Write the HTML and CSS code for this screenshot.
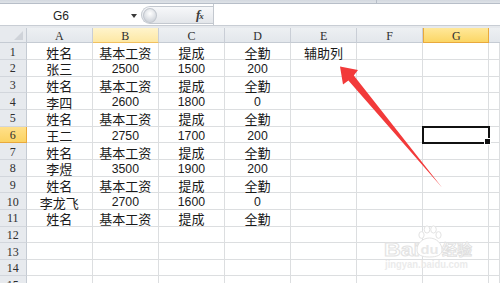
FILE: index.html
```html
<!DOCTYPE html>
<html lang="zh-CN">
<head>
<meta charset="utf-8">
<title>Excel 辅助列</title>
<link rel="stylesheet" href="styles.css">
</head>
<body>
<div class="app">
  <div class="ribbon-edge"><span class="ribbon-split"></span></div>
  <div class="formula-bar">
    <div class="namebox"><span class="name">G6</span><span class="dd"></span></div>
    <div class="fx-zone"><span class="grip"></span><span class="fx">f<span class="fx-x">x</span></span></div>
    <div class="formula-input"></div>
  </div>
  <div class="gap-strip"></div>
  <div class="sheet">
    <div class="corner"><span class="corner-tri"></span></div>
    <div class="ch">A</div><div class="ch ch-hover">B</div><div class="ch">C</div><div class="ch">D</div><div class="ch">E</div><div class="ch">F</div><div class="ch ch-sel">G</div><div class="ch ch-last"></div>

    <div class="rh">1</div><div class="c cj">姓名</div><div class="c cj">基本工资</div><div class="c cj">提成</div><div class="c cj">全勤</div><div class="c cj">辅助列</div><div class="c"></div><div class="c"></div><div class="c"></div>
    <div class="rh">2</div><div class="c cj">张三</div><div class="c n">2500</div><div class="c n">1500</div><div class="c n">200</div><div class="c"></div><div class="c"></div><div class="c"></div><div class="c"></div>
    <div class="rh">3</div><div class="c cj">姓名</div><div class="c cj">基本工资</div><div class="c cj">提成</div><div class="c cj">全勤</div><div class="c"></div><div class="c"></div><div class="c"></div><div class="c"></div>
    <div class="rh">4</div><div class="c cj">李四</div><div class="c n">2600</div><div class="c n">1800</div><div class="c n">0</div><div class="c"></div><div class="c"></div><div class="c"></div><div class="c"></div>
    <div class="rh">5</div><div class="c cj">姓名</div><div class="c cj">基本工资</div><div class="c cj">提成</div><div class="c cj">全勤</div><div class="c"></div><div class="c"></div><div class="c"></div><div class="c"></div>
    <div class="rh rh-sel">6</div><div class="c cj">王二</div><div class="c n">2750</div><div class="c n">1700</div><div class="c n">200</div><div class="c"></div><div class="c"></div><div class="c active"></div><div class="c"></div>
    <div class="rh">7</div><div class="c cj">姓名</div><div class="c cj">基本工资</div><div class="c cj">提成</div><div class="c cj">全勤</div><div class="c"></div><div class="c"></div><div class="c"></div><div class="c"></div>
    <div class="rh">8</div><div class="c cj">李煜</div><div class="c n">3500</div><div class="c n">1900</div><div class="c n">200</div><div class="c"></div><div class="c"></div><div class="c"></div><div class="c"></div>
    <div class="rh">9</div><div class="c cj">姓名</div><div class="c cj">基本工资</div><div class="c cj">提成</div><div class="c cj">全勤</div><div class="c"></div><div class="c"></div><div class="c"></div><div class="c"></div>
    <div class="rh">10</div><div class="c cj">李龙飞</div><div class="c n">2700</div><div class="c n">1600</div><div class="c n">0</div><div class="c"></div><div class="c"></div><div class="c"></div><div class="c"></div>
    <div class="rh">11</div><div class="c cj">姓名</div><div class="c cj">基本工资</div><div class="c cj">提成</div><div class="c cj">全勤</div><div class="c"></div><div class="c"></div><div class="c"></div><div class="c"></div>
    <div class="rh">12</div><div class="c"></div><div class="c"></div><div class="c"></div><div class="c"></div><div class="c"></div><div class="c"></div><div class="c"></div><div class="c"></div>
    <div class="rh">13</div><div class="c"></div><div class="c"></div><div class="c"></div><div class="c"></div><div class="c"></div><div class="c"></div><div class="c"></div><div class="c"></div>
    <div class="rh">14</div><div class="c"></div><div class="c"></div><div class="c"></div><div class="c"></div><div class="c"></div><div class="c"></div><div class="c"></div><div class="c"></div>
    <div class="rh">15</div><div class="c"></div><div class="c"></div><div class="c"></div><div class="c"></div><div class="c"></div><div class="c"></div><div class="c"></div><div class="c"></div>
  </div>
</div>
<svg class="overlay" width="500" height="283" viewBox="0 0 500 283">
  <g class="watermark">
    <text class="wm-bai" x="384" y="256" textLength="36" lengthAdjust="spacingAndGlyphs">Bai</text>
    <ellipse class="wm-paw" cx="421.5" cy="235" rx="2.6" ry="3.4"/>
    <ellipse class="wm-paw" cx="427" cy="229.5" rx="2.8" ry="3.6"/>
    <ellipse class="wm-paw" cx="433.5" cy="229.5" rx="2.8" ry="3.6"/>
    <ellipse class="wm-paw" cx="438.5" cy="235" rx="2.6" ry="3.4"/>
    <path class="wm-paw" d="M417 250 C417 243 423 238 429.5 238 C436 238 442 243 442 250 C442 255 437 257 429.5 257 C422 257 417 255 417 250 Z"/>
    <text class="wm-du" x="420.5" y="254" textLength="18" lengthAdjust="spacingAndGlyphs">du</text>
    <text class="wm-jy" x="442" y="255" textLength="30" lengthAdjust="spacingAndGlyphs">经验</text>
    <text class="wm-url" x="385" y="268" textLength="83" lengthAdjust="spacingAndGlyphs">jingyan.baidu.com</text>
  </g>
  <polygon class="arrow" points="340,66.5 358,70 353.8,75.6 442,187.5 348.4,80.4 343,84.5"/>
</svg>
</body>
</html>
```

FILE: styles.css
```css
* { box-sizing: border-box; }

html, body {
  margin: 0;
  padding: 0;
}

body {
  width: 500px;
  height: 283px;
  overflow: hidden;
  position: relative;
  background: #ffffff;
  font-family: "Liberation Sans", "Noto Sans CJK SC", sans-serif;
}

.app {
  display: flex;
  flex-direction: column;
  width: 500px;
}

/* top strip (bottom edge of ribbon) */
.ribbon-edge {
  height: 4px;
  background: linear-gradient(#d3d8df, #dfe3e8);
  border-bottom: 1px solid #b7bec8;
  display: flex;
  padding-left: 376px;
}
.ribbon-split {
  width: 1px;
  background: #b7bec8;
}

/* formula bar */
.formula-bar {
  height: 22px;
  display: flex;
  background: #ffffff;
  border-bottom: 1px solid #c8cdd4;
}
.namebox {
  width: 141px;
  display: flex;
  align-items: center;
  padding-left: 53px;
  padding-top: 2px;
}
.name {
  font-size: 12px;
  color: #1f1f1f;
  font-family: "Liberation Sans", sans-serif;
  flex: 1;
}
.dd {
  width: 0;
  height: 0;
  border-left: 3.5px solid transparent;
  border-right: 3.5px solid transparent;
  border-top: 4px solid #3a3a3a;
  margin-right: 4px;
  margin-top: 1px;
}
.fx-zone {
  width: 72px;
  margin: 2px 0 1px 0;
  display: flex;
  align-items: center;
  border: 1px solid #c3c8cf;
  border-right: none;
  border-radius: 10px 0 0 10px;
  background: linear-gradient(#f7f8fa, #e3e6ea);
  padding-left: 1px;
}
.grip {
  width: 14px;
  height: 15px;
  border-radius: 50%;
  background: radial-gradient(circle at 50% 35%, #ffffff, #d4d8de 70%);
  border: 1px solid #c2c7ce;
}
.fx {
  margin-left: 39px;
  font-family: "Liberation Serif", serif;
  font-style: italic;
  font-weight: bold;
  font-size: 13px;
  color: #3b3b3b;
  letter-spacing: -1px;
}
.fx-x {
  font-size: 9px;
}
.formula-input {
  flex: 1;
  border-left: 1px solid #c3c8cf;
  background: #ffffff;
}

.gap-strip {
  height: 2px;
  background: #e6e9ed;
}

/* sheet grid */
.sheet {
  display: grid;
  grid-template-columns: 26.7px repeat(7, 66.1px) 1fr;
  grid-template-rows: 15.3px repeat(15, 16.67px);
}

.corner {
  background: #e7eaee;
  border-right: 1px solid #c5cbd3;
  border-bottom: 1px solid #c5cbd3;
  position: relative;
}
.corner-tri {
  position: absolute;
  right: 3px;
  bottom: 2px;
  width: 0;
  height: 0;
  border-left: 9px solid transparent;
  border-bottom: 9px solid #cfd3d9;
}

.ch {
  background: linear-gradient(#edf0f3, #e3e7ec);
  border-right: 1px solid #c9ced6;
  border-bottom: 1px solid #c5cbd3;
  font-family: "Liberation Serif", "DejaVu Serif", serif;
  font-size: 12px;
  color: #2e2e2e;
  text-align: center;
  line-height: 13px;
  padding-top: 2px;
}
.ch-hover {
  background: linear-gradient(#fff4cc, #fde8a4);
  border-bottom-color: #f0c060;
}
.ch-sel {
  background: linear-gradient(#ffe89a, #fbd665);
  border-right-color: #e9a93c;
  border-left: 1px solid #e9a93c;
  border-bottom-color: #e9a93c;
}
.ch-last {
  border-right: none;
}

.rh {
  background: #e7eaee;
  border-right: 1px solid #c5cbd3;
  border-bottom: 1px solid #d2d6dc;
  font-family: "Liberation Serif", "DejaVu Serif", serif;
  font-size: 12px;
  color: #2e2e2e;
  text-align: center;
  line-height: 14px;
  padding-top: 1.5px;
  overflow: hidden;
}
.rh-sel {
  background: linear-gradient(#ffe08a, #fbd363);
  border-bottom-color: #e9a93c;
  border-right-color: #e9a93c;
}

.c {
  border-right: 1px solid #dcdee0;
  border-bottom: 1px solid #dcdee0;
  text-align: center;
  color: #111111;
  white-space: nowrap;
}
.cj {
  font-family: "Noto Sans CJK SC", sans-serif;
  font-size: 13px;
  line-height: 14px;
  padding-top: 2.5px;
  font-weight: 400;
  color: #1a1a1a;
}
.n {
  font-family: "Liberation Sans", sans-serif;
  font-size: 12.3px;
  line-height: 14px;
  padding-top: 2px;
  color: #1a1a1a;
}

.active {
  position: relative;
  outline: 2px solid #111111;
  outline-offset: -1px;
}
.active::after {
  content: "";
  position: absolute;
  right: -3px;
  bottom: -3px;
  width: 5px;
  height: 5px;
  background: #111111;
  border: 1px solid #ffffff;
}

/* overlay: arrow + watermark */
.overlay {
  position: absolute;
  left: 0;
  top: 0;
  pointer-events: none;
}
.arrow {
  fill: #f23a3a;
}
.wm-bai {
  font-family: "Liberation Sans", sans-serif;
  font-weight: bold;
  font-size: 19px;
  fill: #ffffff;
  stroke: #e3e3e3;
  stroke-width: 1;
}
.wm-paw {
  fill: #ffffff;
  stroke: #e3e3e3;
  stroke-width: 1;
}
.wm-du {
  font-family: "Liberation Sans", sans-serif;
  font-weight: bold;
  font-size: 12px;
  fill: #e8e8e8;
}
.wm-jy {
  font-family: "Noto Sans CJK SC", sans-serif;
  font-weight: bold;
  font-size: 15px;
  fill: #ffffff;
  stroke: #e0e0e0;
  stroke-width: 0.9;
}
.wm-url {
  font-family: "Liberation Sans", sans-serif;
  font-weight: bold;
  font-size: 10px;
  fill: #ebebeb;
}
```
